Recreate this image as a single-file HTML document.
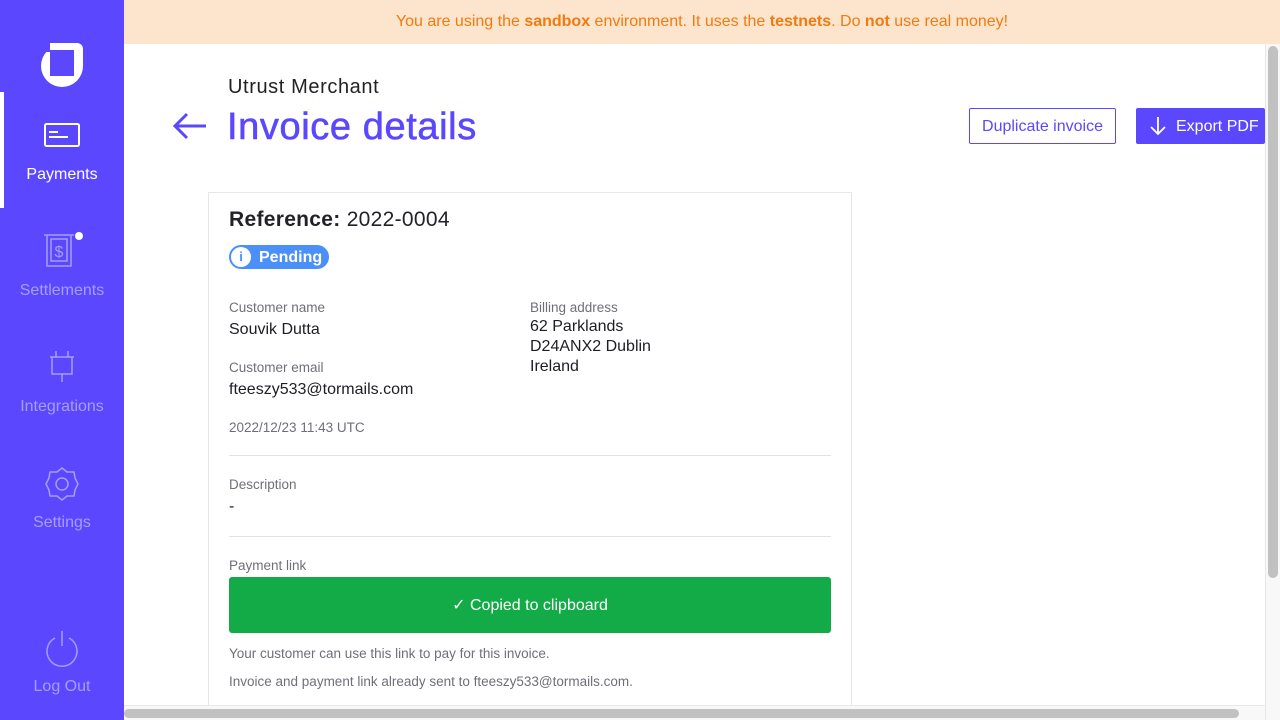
<!DOCTYPE html>
<html><head><meta charset="utf-8"><style>
*{margin:0;padding:0;box-sizing:border-box}
body{width:1280px;height:720px;overflow:hidden;font-family:"Liberation Sans",sans-serif;background:#fff;position:relative}
.a{position:absolute;white-space:nowrap}
.side{position:absolute;left:0;top:0;width:124px;height:720px;background:#5b48fe}
.nav{position:absolute;left:0;width:124px;text-align:center;font-size:16px;color:#a79dff}
.lbl{font-size:13.5px;color:#6f6f78}
.val{font-size:16px;color:#1d1d25}
.small{font-size:13.5px;color:#6f6f78}
</style></head><body>
<div class="side">
  <svg class="a" style="left:40px;top:42px" width="44" height="46" viewBox="0 0 44 46"><circle cx="22" cy="24" r="21" fill="#fff"/><path d="M9 1H37A6 6 0 0 1 43 7V24H9Z" fill="#fff"/><rect x="0" y="0" width="10" height="10" fill="#5b48fe"/><rect x="10" y="8" width="24" height="26" fill="#5b48fe"/></svg>
  <div class="a" style="left:0;top:92px;width:4px;height:116px;background:#fff"></div>
  <svg class="a" style="left:44px;top:122px" width="36" height="26" viewBox="0 0 36 26"><rect x="1" y="2" width="34" height="22" rx="1.5" fill="none" stroke="#fff" stroke-width="2"/><path d="M5 10H14M5 15H24" stroke="#fff" stroke-width="2"/></svg>
  <div class="nav" style="top:166px;color:#fff">Payments</div>
  <svg class="a" style="left:43px;top:232px" width="40" height="38" viewBox="0 0 40 38"><path d="M1 3H31M4 3V34H28V3" fill="none" stroke="#a79dff" stroke-width="1.5"/><rect x="8" y="7" width="16" height="22" fill="none" stroke="#a79dff" stroke-width="1.5"/><text x="16" y="25" font-size="16" fill="#a79dff" text-anchor="middle" font-family="Liberation Sans">$</text><circle cx="36" cy="4" r="4" fill="#fff"/></svg>
  <div class="nav" style="top:282px">Settlements</div>
  <svg class="a" style="left:48px;top:350px" width="28" height="36" viewBox="0 0 28 36"><path d="M8 1V7M20 1V7M2 7H26M4 7V24H24V7M14 24V32" fill="none" stroke="#a79dff" stroke-width="1.5"/></svg>
  <div class="nav" style="top:398px">Integrations</div>
  <svg class="a" style="left:44px;top:466px" width="36" height="36" viewBox="0 0 36 36"><path d="M18 2 L23 6 L30 6 L31 12 L34 18 L31 24 L30 30 L23 30 L18 34 L13 30 L6 30 L5 24 L2 18 L5 12 L6 6 L13 6Z" fill="none" stroke="#a79dff" stroke-width="1.5" stroke-linejoin="round"/><circle cx="18" cy="18" r="6" fill="none" stroke="#a79dff" stroke-width="1.5"/></svg>
  <div class="nav" style="top:514px">Settings</div>
  <svg class="a" style="left:44px;top:630px" width="36" height="38" viewBox="0 0 36 38"><path d="M11 8A15 15 0 1 0 25 8" fill="none" stroke="#a79dff" stroke-width="1.5"/><path d="M18 1V16" stroke="#a79dff" stroke-width="1.5"/></svg>
  <div class="nav" style="top:678px">Log Out</div>
</div>
<div class="a" style="left:124px;top:0;width:1156px;height:44px;background:#fde4cd;text-align:center;line-height:44px;font-size:16px;color:#f07b0f">You are using the <b>sandbox</b> environment. It uses the <b>testnets</b>. Do <b>not</b> use real money!</div>
<div class="a" style="left:228px;top:76px;font-size:20px;color:#222;letter-spacing:0.6px">Utrust Merchant</div>
<svg class="a" style="left:172px;top:112px" width="36" height="28" viewBox="0 0 36 28"><path d="M34 14H3M15 2L3 14L15 26" fill="none" stroke="#5b48fe" stroke-width="3"/></svg>
<div class="a" style="left:227px;top:106px;font-size:38px;color:#5b48fe;letter-spacing:0.6px;-webkit-text-stroke:0.6px #5b48fe">Invoice details</div>
<div class="a" style="left:969px;top:108px;width:147px;height:36px;border:1px solid #5b48fe;border-radius:2px;color:#5b48fe;font-size:16px;line-height:36px;text-align:center">Duplicate invoice</div>
<div class="a" style="left:1136px;top:108px;width:129px;height:36px;background:#5b48fe;border-radius:2px;color:#fff;font-size:16px;line-height:38px;padding-left:40px">Export PDF</div>
<svg class="a" style="left:1150px;top:116px" width="16" height="20" viewBox="0 0 16 20"><path d="M8 1V18M1 11L8 18L15 11" fill="none" stroke="#fff" stroke-width="1.8"/></svg>
<div class="a" style="left:208px;top:192px;width:644px;height:514px;border:1px solid #e6e6e6"></div>
<div class="a" style="left:229px;top:208px;font-size:21px;color:#22222a;letter-spacing:0.3px"><b>Reference:</b> 2022-0004</div>
<div class="a" style="left:229px;top:245px;width:100px;height:24px;border-radius:12px;background:#4a90f8;color:#fff;font-weight:bold;font-size:16px;line-height:25px;padding-left:30px">Pending</div>
<div class="a" style="left:231px;top:247px;width:20px;height:20px;border-radius:50%;background:#fff;color:#4a90f8;font-size:13px;font-weight:bold;text-align:center;line-height:20px">i</div>
<div class="a lbl" style="left:229px;top:300px">Customer name</div>
<div class="a val" style="left:229px;top:321px">Souvik Dutta</div>
<div class="a lbl" style="left:229px;top:360px">Customer email</div>
<div class="a val" style="left:229px;top:381px">fteeszy533@tormails.com</div>
<div class="a lbl" style="left:229px;top:420px">2022/12/23 11:43 UTC</div>
<div class="a lbl" style="left:530px;top:300px">Billing address</div>
<div class="a val" style="left:530px;top:317px;line-height:20px">62 Parklands<br>D24ANX2 Dublin<br>Ireland</div>
<div class="a" style="left:229px;top:455px;width:602px;height:1px;background:#e3e3e3"></div>
<div class="a lbl" style="left:229px;top:477px">Description</div>
<div class="a val" style="left:229px;top:498px">-</div>
<div class="a" style="left:229px;top:536px;width:602px;height:1px;background:#e3e3e3"></div>
<div class="a lbl" style="left:229px;top:558px">Payment link</div>
<div class="a" style="left:229px;top:577px;width:602px;height:56px;background:#12ab47;border-radius:3px;color:#fff;font-size:16px;text-align:center;line-height:58px">✓ Copied to clipboard</div>
<div class="a small" style="left:229px;top:646px">Your customer can use this link to pay for this invoice.</div>
<div class="a small" style="left:229px;top:674px">Invoice and payment link already sent to fteeszy533@tormails.com.</div>
<div class="a" style="left:1265px;top:44px;width:15px;height:676px;background:#f8f8f8;border-left:1px solid #e8e8e8"></div>
<div class="a" style="left:1268px;top:46px;width:10px;height:532px;background:#c1c1c1;border-radius:5px"></div>
<div class="a" style="left:124px;top:705px;width:1141px;height:15px;background:#f8f8f8;border-top:1px solid #e8e8e8"></div>
<div class="a" style="left:124px;top:709px;width:1115px;height:9px;background:#c1c1c1;border-radius:5px"></div>
</body></html>
